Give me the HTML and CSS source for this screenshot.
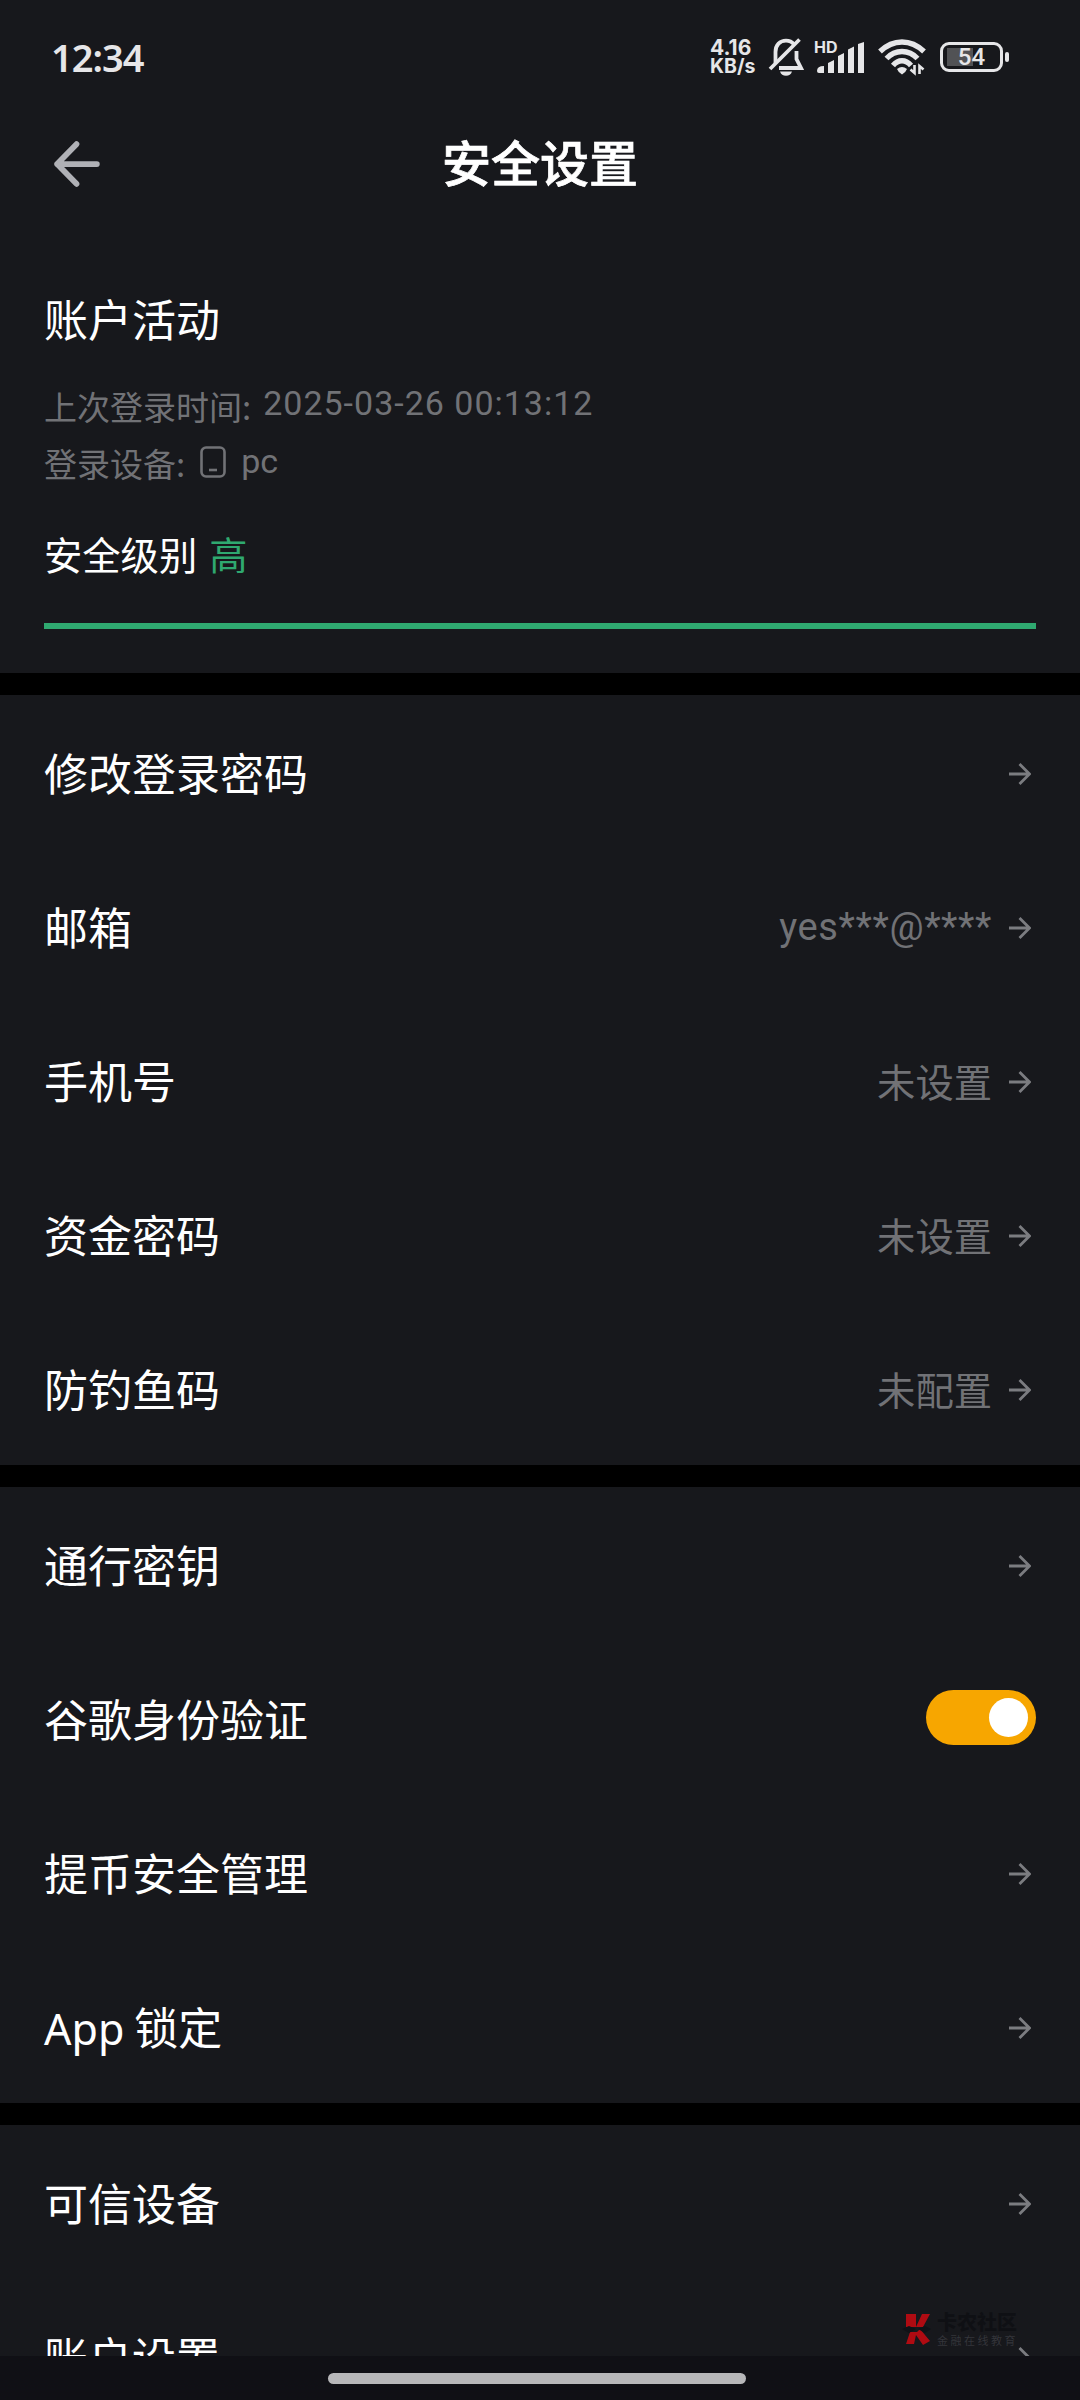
FILE: index.html
```html
<!DOCTYPE html>
<html lang="zh-CN">
<head>
<meta charset="utf-8">
<title>安全设置</title>
<link rel="stylesheet" href="styles.css">
</head>
<body>
<svg class="defs" aria-hidden="true">
  <symbol id="arrow" viewBox="0 0 22 22"><path d="M0 11H20.5M10.5 1L20.5 11L10.5 21" fill="none" stroke="currentColor" stroke-width="2.8"/></symbol>
</svg>
<div class="screen">
  <header class="status">
    <span class="time">12:34</span>
    <span class="speed"><span class="rate">4.16</span><span>KB/s</span></span>
    <svg class="bell" viewBox="0 0 36 40" fill="none" stroke="currentColor" stroke-width="3.8">
      <path d="M7.500 26V15C7.500 8 12 3.600 18 3.600C21.500 3.600 24.200 5 26 7.200M28.500 14V22L33 31H11"/>
      <path d="M2 32L31.500 2.500"/>
      <path d="M12 34.500H24C23 37.500 21 38.800 18 38.800S13 37.500 12 34.500Z" fill="currentColor" stroke="none"/>
    </svg>
    <div class="signal">
      <span class="hd">HD</span>
      <svg class="bars" viewBox="0 0 50 34" fill="currentColor">
        <path d="M1 31Q1 26 8 26V33H3Q1 33 1 31ZM12 23L18 20V33H12ZM22 16L28 13V33H22ZM32 9.500L38 6.500V33H32ZM42 4L48 2V33H42Z"/>
      </svg>
    </div>
    <svg class="wifi" viewBox="0 0 48 38">
      <g fill="none" stroke="currentColor" stroke-width="5.4"><path d="M2 13.500Q12 4 24 4T46 13.500"/><path d="M8.500 20.500Q15 13.500 24 13.500T39.500 20.500"/><path d="M15 27.500Q19 22.800 24 22.800T33 27.500"/></g>
      <path d="M19 31Q24 27 29 31Q28 34 24 36.500Q20 34 19 31Z" fill="currentColor"/>
      <path d="M36.500 27V35L32.500 31.500M41.500 36V28L45.500 31.500" fill="none" stroke="currentColor" stroke-width="2.600"/>
    </svg>
    <div class="battery"><span>54</span></div>
  </header>
  <nav class="topbar">
    <svg class="back" viewBox="0 0 44 44" fill="none" stroke="currentColor" stroke-width="5.500" stroke-linecap="round" stroke-linejoin="round"><path d="M41 22H3M21.500 3L3 22L21.500 41"/></svg>
    <h1>安全设置</h1>
  </nav>
  <section class="activity">
    <h2>账户活动</h2>
    <div class="meta"><span>上次登录时间:</span><span class="latin date">2025-03-26 00:13:12</span></div>
    <div class="meta device"><span>登录设备:</span>
      <svg class="phone" viewBox="0 0 26 32" fill="none" stroke="currentColor" stroke-width="2.600"><rect x="1.500" y="1.500" width="23" height="29" rx="4.500"/><path d="M9 24H17"/></svg>
      <span class="latin">pc</span></div>
    <div class="level"><span>安全级别</span><span class="high">高</span></div>
    <div class="progress"></div>
  </section>
  <section class="group">
    <div class="row"><span>修改登录密码</span><svg class="go"><use href="#arrow"/></svg></div>
    <div class="row"><span>邮箱</span><span class="value email">yes***@****</span><svg class="go"><use href="#arrow"/></svg></div>
    <div class="row"><span>手机号</span><span class="value">未设置</span><svg class="go"><use href="#arrow"/></svg></div>
    <div class="row"><span>资金密码</span><span class="value">未设置</span><svg class="go"><use href="#arrow"/></svg></div>
    <div class="row"><span>防钓鱼码</span><span class="value">未配置</span><svg class="go"><use href="#arrow"/></svg></div>
  </section>
  <section class="group">
    <div class="row"><span>通行密钥</span><svg class="go"><use href="#arrow"/></svg></div>
    <div class="row"><span>谷歌身份验证</span><span class="toggle"></span></div>
    <div class="row"><span>提币安全管理</span><svg class="go"><use href="#arrow"/></svg></div>
    <div class="row"><span><span class="app">App</span> 锁定</span><svg class="go"><use href="#arrow"/></svg></div>
  </section>
  <section class="group last">
    <div class="row"><span>可信设备</span><svg class="go"><use href="#arrow"/></svg></div>
    <div class="row"><span>账户设置</span><svg class="go"><use href="#arrow"/></svg></div>
  </section>
  <div class="watermark">
    <svg viewBox="0 0 32 34"><path d="M5 2H15V15L21 2H29L22 15H5ZM5 32L9 20H16L19 17L29 29L22 33L15 23L13 32Z" fill="#b90b12"/><path d="M1 17L8 14L15 17L8 21ZM17 17L24 14L30 17L24 21Z" fill="#111217"/></svg>
    <div><b>卡农社区</b><small>金融在线教育</small></div>
  </div>
  <footer class="home"><span></span></footer>
</div>
</body>
</html>
```
FILE: styles.css
```css
* { box-sizing: border-box; }
body { margin: 0; background: #000; }
.defs { position: absolute; width: 0; height: 0; }
.screen {
  position: relative;
  display: flex;
  flex-direction: column;
  width: 1080px;
  height: 2400px;
  overflow: hidden;
  background: #000;
  color: #fff;
  font-family: "Noto Sans CJK SC", sans-serif;
}
.status {
  display: flex;
  align-items: center;
  flex: none;
  height: 114px;
  padding: 0 77px 0 51px;
  background: #17181c;
  color: #e6e6e8;
  font-family: Inter, sans-serif;
}
.time { flex: 1; padding-bottom: 1px; font: 600 38px/1 "Noto Sans", sans-serif; letter-spacing: -1px; }
.speed { display: flex; flex-direction: column; width: 48px; font: 700 19.5px/19px Inter, sans-serif; white-space: nowrap; }
.rate { font-size: 21px; }
.bell { width: 36px; height: 40px; margin-left: 10px; }
.signal { position: relative; width: 50px; height: 34px; margin-left: 12px; }
.bars { display: block; width: 50px; height: 34px; }
.hd { position: absolute; left: -2px; top: -1px; font: 700 16px/16px Inter, sans-serif; }
.wifi { width: 48px; height: 38px; margin-left: 12px; }
.battery {
  position: relative;
  display: flex;
  align-items: center;
  justify-content: center;
  width: 63px;
  height: 30px;
  margin-left: 14px;
  border: 3px solid currentColor;
  border-radius: 9px;
  background: linear-gradient(#515255, #515255) 4px 3px / 26px 18px no-repeat;
  font: 500 24px/1 Roboto, sans-serif;
}
.battery::after { content: ""; position: absolute; right: -9px; top: 7px; width: 4px; height: 10px; border-radius: 2px; background: currentColor; }
.topbar { display: grid; grid-template-columns: 56px 1fr 56px; align-items: center; flex: none; height: 100px; padding: 0 54px; background: #17181c; }
.back { width: 46px; height: 46px; color: #b0b1b6; }
h1 { margin: 0; padding-bottom: 7px; text-align: center; font-size: 49px; font-weight: 500; line-height: 1; -webkit-text-stroke: .7px; }
.activity { flex: none; height: 459px; padding: 72px 44px 0; background: #17181c; }
h2 { margin: 0; font-size: 44px; font-weight: 400; line-height: 64px; }
.meta { display: flex; align-items: center; height: 57px; margin-top: 28px; color: #717276; font-size: 33px; line-height: 57px; }
.device { margin-top: 0; }
.device .latin { margin-top: -5px; }
.latin { font-family: Roboto, sans-serif; font-size: 34px; }
.latin.date { margin: -7px 0 0 12px; letter-spacing: 1px; }
.phone { width: 26px; height: 32px; margin: -3px 15px 0 15px; }
.level { display: flex; gap: 12px; margin-top: 34px; font-size: 38.3px; line-height: 56px; }
.high { color: #2fa970; }
.progress { height: 6px; margin-top: 41px; background: #2fa970; }
.group { flex: none; margin-top: 22px; background: #17181c; }
.row { display: flex; align-items: center; height: 154px; padding: 3px 49px 0 44px; font-size: 44px; }
.row > span:first-child { flex: 1; padding-bottom: 3px; }
.value { padding-bottom: 3px; color: #717276; font-size: 38.3px; }
.value.email { padding-bottom: 2px; font-family: Roboto, sans-serif; font-size: 38px; letter-spacing: .6px; }
.go { width: 22px; height: 22px; margin-left: 17px; color: #7b7c80; }
.app { font-family: "Noto Sans", sans-serif; font-size: 43px; }
.toggle { width: 110px; height: 55px; margin: 0 -5px 5px 0; padding: 8px; border-radius: 28px; background: #f7a600; }
.toggle::after { content: ""; display: block; width: 39px; height: 39px; margin-left: auto; border-radius: 50%; background: #fff; }
.watermark { position: absolute; left: 901px; top: 2312px; display: flex; gap: 4px; opacity: .95; }
.watermark svg { width: 32px; height: 34px; }
.watermark div { display: flex; flex-direction: column; gap: 2px; }
.watermark b { color: #0f1014; font-size: 20px; line-height: 20px; font-weight: 900; }
.watermark small { color: #36373c; font-size: 11px; line-height: 12px; letter-spacing: 2.500px; }
.home { position: absolute; left: 0; top: 2356px; display: flex; justify-content: center; width: 1080px; height: 44px; padding: 17px 6px 0 0; background: #101015; }
.home span { width: 418px; height: 11px; border-radius: 6px; background: #b7b7b9; }
```
